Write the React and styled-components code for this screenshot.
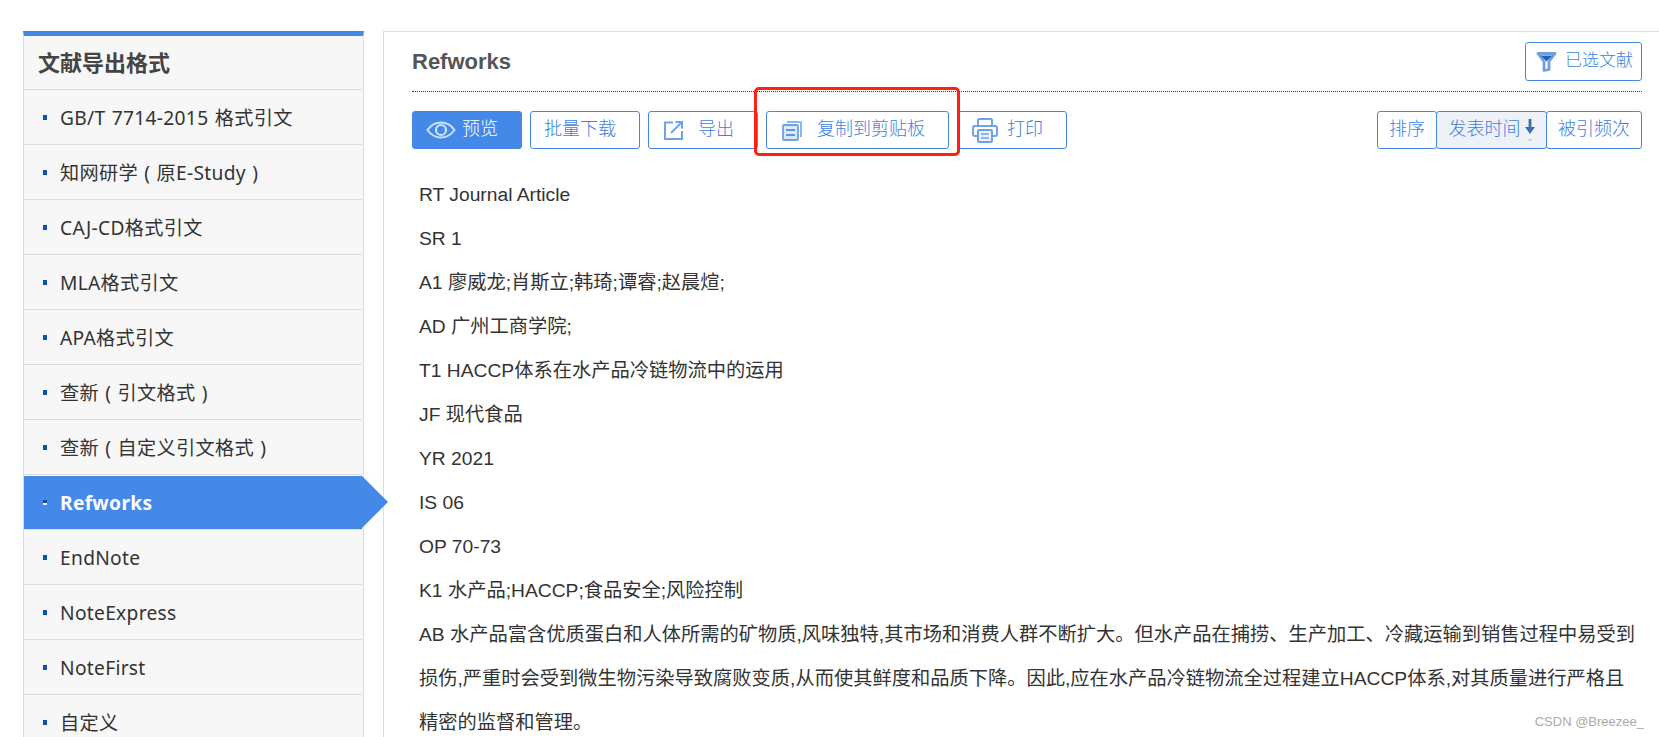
import React from 'react';
import styled, { createGlobalStyle } from 'styled-components';

const Global = createGlobalStyle`
  html, body { margin: 0; padding: 0; background: #fff; height: 737px; overflow: hidden; }
`;

const ui = `"Noto Sans", "Noto Sans CJK SC", sans-serif`;
const arial = `"Liberation Sans", "Noto Sans CJK SC", sans-serif`;
const blue = '#4589e8';

const Page = styled.div`
  position: relative;
  display: flex;
  gap: 19px;
  height: 706px;
  padding: 31px 0 0 23px;
  overflow: hidden;
`;
const Sidebar = styled.aside`
  position: relative;
  z-index: 2;
  flex: 0 0 341px;
  box-sizing: border-box;
  height: 720px;
  border-top: 5px solid ${blue};
  border-left: 1px solid #ddd;
  border-right: 1px solid #ddd;
  padding-right: 1px;
  background: #f7f7f7;
`;
const SideHead = styled.h2`
  margin: 0;
  box-sizing: border-box;
  height: 54px;
  padding-left: 14px;
  border-bottom: 1px solid #ddd;
  font: bold 22px/52px ${ui};
  color: #444;
`;
const NavItem = styled.div`
  position: relative;
  box-sizing: border-box;
  height: 55px;
  display: flex;
  align-items: center;
  gap: 13px;
  padding: 0 0 0 19px;
  border-bottom: 1px solid #ddd;
  font: ${p => (p.$active ? 'bold' : 'normal')} 19.2px ${ui};
  word-spacing: 1px;
  letter-spacing: 0.3px;
  color: ${p => (p.$active ? '#fff' : '#333')};
  white-space: pre;
  ${p => p.$active && `
    background: ${blue};
    border-top: 1px solid #f7f7f7;
    &::after {
      content: '';
      position: absolute;
      left: 100%;
      top: 0;
      border-left: 26px solid ${blue};
      border-top: 26.5px solid transparent;
      border-bottom: 26.5px solid transparent;
    }
  `}
`;
const Bullet = styled.i`
  flex: none;
  width: 4px;
  height: 5px;
  background: ${p => (p.$active ? 'linear-gradient(#0b4fb0 50%, #fff 50%)' : '#0b4fb0')};
`;

const Main = styled.main`
  flex: 1;
  min-width: 0;
  box-sizing: border-box;
  border-top: 1px solid #ddd;
  border-left: 1px solid #ddd;
  padding: 0 17px 0 28px;
`;
const Header = styled.header`
  display: flex;
  justify-content: space-between;
  align-items: center;
  box-sizing: border-box;
  height: 60px;
  padding: 10px 0;
  border-bottom: 1px dotted #1f2f8f;
`;
const Title = styled.h1`
  margin: 0;
  font: bold 22px ${arial};
  color: #555;
`;
const Toolbar = styled.div`
  display: flex;
  justify-content: space-between;
  margin: 19px 0 24px;
`;
const Group = styled.div`
  display: flex;
  gap: ${p => p.$gap || 0}px;
`;
const Btn = styled.button`
  box-sizing: border-box;
  display: flex;
  align-items: center;
  justify-content: ${p => (p.$center ? 'center' : 'flex-start')};
  width: ${p => p.$w}px;
  height: ${p => p.$h || 38}px;
  padding: 0 0 0 ${p => p.$pad || 0}px;
  gap: ${p => p.$gap || 0}px;
  margin-left: ${p => (p.$joined ? -1 : 0)}px;
  border: 1px solid ${blue};
  border-radius: 3px;
  background: ${p => (p.$primary ? blue : p.$soft ? '#eef2f7' : '#fff')};
  color: ${p => (p.$primary ? '#fff' : '#3a7fe6')};
  font: ${p => p.$fs || 18}px ${ui};
  font-weight: 300;
  line-height: 1;
  white-space: nowrap;
`;
const Label = styled.span`
  position: relative;
  top: -2px;
`;
const Highlight = styled.div`
  position: absolute;
  left: 754px;
  top: 87px;
  width: 206px;
  height: 69px;
  box-sizing: border-box;
  border: 3px solid #ff1f14;
  border-radius: 5px;
  pointer-events: none;
`;
const Record = styled.div`
  padding-left: 7px;
`;
const Line = styled.p`
  margin: 0;
  font: 19.25px/44px ${arial};
  color: #333;
`;
const Watermark = styled.div`
  position: absolute;
  right: 15px;
  top: 714px;
  font: 13px/16px ${arial};
  color: #aaa;
`;

const EyeIcon = () => (
  <svg width="30" height="18" viewBox="0 0 30 18" fill="none" stroke="#cfe0fa">
    <path d="M1.500 9C5 4 9.500 1.500 15 1.500S25 4 28.500 9C25 14 20.500 16.500 15 16.500S5 14 1.500 9Z" strokeWidth="2" />
    <circle cx="15" cy="9" r="5" strokeWidth="2.200" />
  </svg>
);
const ExportIcon = () => (
  <svg width="19" height="19" viewBox="0 0 19 19" fill="none" stroke="#6ea2ea" strokeWidth="2">
    <path d="M9 1.500H1V18H18V10" />
    <path d="M7 12L17.500 1.500M11.500 1H18V7.500" />
  </svg>
);
const CopyIcon = () => (
  <svg width="20" height="21" viewBox="0 0 20 21" fill="none">
    <path d="M5 2H18C18.600 2 19 2.400 19 3V17" stroke="#8db6ef" strokeWidth="2" />
    <rect x="1" y="5" width="15" height="15" rx="1" fill="#dbe8fb" stroke="#6ea2ea" strokeWidth="1.800" />
    <path d="M4 10H13M4 15H13" stroke="#5a95e8" strokeWidth="2" />
  </svg>
);
const PrintIcon = () => (
  <svg width="26" height="25" viewBox="0 0 26 25" fill="none" stroke="#6ea2ea" strokeWidth="2">
    <path d="M6 8V2.500C6 1.700 6.700 1 7.500 1H18.500C19.300 1 20 1.700 20 2.500V8" />
    <path d="M6 18H3C1.900 18 1 17.100 1 16V10C1 8.900 1.900 8 3 8H23C24.100 8 25 8.900 25 10V16C25 17.100 24.100 18 23 18H20" />
    <rect x="6" y="12" width="14" height="12" rx="1" fill="#eaf1fc" />
    <path d="M9 16H17M9 20H17" strokeWidth="1.500" />
  </svg>
);
const FilterIcon = () => (
  <svg width="21" height="21" viewBox="0 0 21 21">
    <path d="M2 2.500H19L13 10.500V18.500L8 19.500V10.500Z" fill="#fff" stroke="#6fa0dc" strokeWidth="2.800" strokeLinejoin="round" />
    <path d="M4.500 4.500H16.500L10.500 10.500Z" fill="#1f62b8" />
  </svg>
);
const DownArrow = () => (
  <svg width="10" height="22" viewBox="0 0 10 22" fill="#3f6fb3">
    <path d="M3.600 0H6.400V8H10L5 15L0 8H3.600Z" />
    <rect x="3.500" y="20" width="3" height="1.500" fill="#b7c4d8" />
  </svg>
);

const nav = [
  'GB/T 7714-2015 格式引文',
  '知网研学 ( 原E-Study )',
  'CAJ-CD格式引文',
  'MLA格式引文',
  'APA格式引文',
  '查新 ( 引文格式 )',
  '查新 ( 自定义引文格式 )',
  'Refworks',
  'EndNote',
  'NoteExpress',
  'NoteFirst',
  '自定义',
];
const lines = [
  'RT Journal Article',
  'SR 1',
  'A1 廖威龙;肖斯立;韩琦;谭睿;赵晨煊;',
  'AD 广州工商学院;',
  'T1 HACCP体系在水产品冷链物流中的运用',
  'JF 现代食品',
  'YR 2021',
  'IS 06',
  'OP 70-73',
  'K1 水产品;HACCP;食品安全;风险控制',
  'AB 水产品富含优质蛋白和人体所需的矿物质,风味独特,其市场和消费人群不断扩大。但水产品在捕捞、生产加工、冷藏运输到销售过程中易受到损伤,严重时会受到微生物污染导致腐败变质,从而使其鲜度和品质下降。因此,应在水产品冷链物流全过程建立HACCP体系,对其质量进行严格且精密的监督和管理。',
];

export default function App() {
  return (
    <Page>
      <Global />
      <Sidebar>
        <SideHead>文献导出格式</SideHead>
        {nav.map(n => {
          const active = n === 'Refworks';
          return (
            <NavItem key={n} $active={active}>
              <Bullet $active={active} />
              {n}
            </NavItem>
          );
        })}
      </Sidebar>
      <Main>
        <Header>
          <Title>Refworks</Title>
          <Btn $w={117} $h={39} $pad={10} $gap={8} $fs={17}><FilterIcon /><Label>已选文献</Label></Btn>
        </Header>
        <Toolbar>
          <Group $gap={8}>
            <Btn $primary $w={110} $pad={13} $gap={6}><EyeIcon /><Label>预览</Label></Btn>
            <Btn $w={110} $pad={13}><Label>批量下载</Label></Btn>
            <Btn $w={110} $pad={15} $gap={15}><ExportIcon /><Label>导出</Label></Btn>
            <Btn $w={183} $pad={15} $gap={15}><CopyIcon /><Label>复制到剪贴板</Label></Btn>
            <Btn $w={110} $pad={14} $gap={9}><PrintIcon /><Label>打印</Label></Btn>
          </Group>
          <Group>
            <Btn $w={60} $center><Label>排序</Label></Btn>
            <Btn $w={111} $joined $soft $center $gap={4}><Label>发表时间</Label><DownArrow /></Btn>
            <Btn $w={96} $joined $center><Label>被引频次</Label></Btn>
          </Group>
        </Toolbar>
        <Record>
          {lines.map(l => <Line key={l}>{l}</Line>)}
        </Record>
      </Main>
      <Highlight />
      <Watermark>CSDN @Breezee_</Watermark>
    </Page>
  );
}
